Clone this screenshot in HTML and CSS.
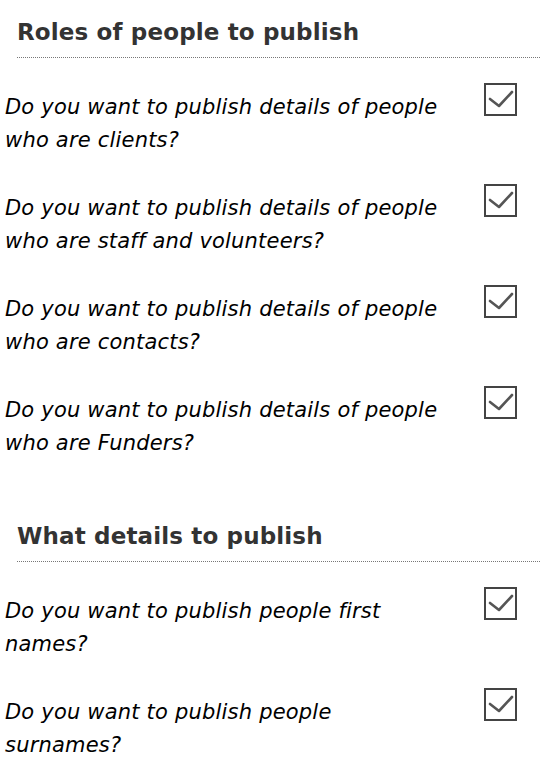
FILE: index.html
```html
<!DOCTYPE html>
<html>
<head>
<meta charset="utf-8">
<link rel="stylesheet" href="styles.css">
</head>
<body>
<section class="group">
  <h2 class="group-title">Roles of people to publish</h2>
  <div class="rows">
    <div class="row">
      <p class="question">Do you want to publish details of people who are clients?</p>
      <span class="check"><svg viewBox="0 0 33 33" width="33" height="33"><path d="M6 16 L15 23 L28 9" fill="none" stroke="#555" stroke-width="2.6" stroke-linecap="round" stroke-linejoin="round"/></svg></span>
    </div>
    <div class="row">
      <p class="question">Do you want to publish details of people who are staff and volunteers?</p>
      <span class="check"><svg viewBox="0 0 33 33" width="33" height="33"><path d="M6 16 L15 23 L28 9" fill="none" stroke="#555" stroke-width="2.6" stroke-linecap="round" stroke-linejoin="round"/></svg></span>
    </div>
    <div class="row">
      <p class="question">Do you want to publish details of people who are contacts?</p>
      <span class="check"><svg viewBox="0 0 33 33" width="33" height="33"><path d="M6 16 L15 23 L28 9" fill="none" stroke="#555" stroke-width="2.6" stroke-linecap="round" stroke-linejoin="round"/></svg></span>
    </div>
    <div class="row">
      <p class="question">Do you want to publish details of people who are Funders?</p>
      <span class="check"><svg viewBox="0 0 33 33" width="33" height="33"><path d="M6 16 L15 23 L28 9" fill="none" stroke="#555" stroke-width="2.6" stroke-linecap="round" stroke-linejoin="round"/></svg></span>
    </div>
  </div>
</section>
<section class="group">
  <h2 class="group-title">What details to publish</h2>
  <div class="rows">
    <div class="row">
      <p class="question">Do you want to publish people first names?</p>
      <span class="check"><svg viewBox="0 0 33 33" width="33" height="33"><path d="M6 16 L15 23 L28 9" fill="none" stroke="#555" stroke-width="2.6" stroke-linecap="round" stroke-linejoin="round"/></svg></span>
    </div>
    <div class="row">
      <p class="question">Do you want to publish people surnames?</p>
      <span class="check"><svg viewBox="0 0 33 33" width="33" height="33"><path d="M6 16 L15 23 L28 9" fill="none" stroke="#555" stroke-width="2.6" stroke-linecap="round" stroke-linejoin="round"/></svg></span>
    </div>
  </div>
</section>
</body>
</html>
```

FILE: styles.css
```css
html, body {
  margin: 0;
  padding: 0;
  background: #fff;
}
body {
  font-family: "DejaVu Sans", Verdana, sans-serif;
  color: #000;
}
.group + .group {
  padding-top: 44px;
}
.group-title {
  margin: 0 0 0 17px;
  padding-top: 14px;
  padding-bottom: 7px;
  font-size: 23px;
  line-height: 36px;
  font-weight: bold;
  letter-spacing: 0.15px;
  color: #333;
  border-bottom: 1px dotted #777;
}
.rows {
  display: flex;
  flex-direction: column;
  gap: 27px;
  padding-top: 25px;
}
.row {
  display: flex;
  align-items: flex-start;
  justify-content: space-between;
  padding-left: 5px;
  padding-right: 23px;
}
.question {
  margin: 8px 0 0 0;
  width: 440px;
  font-size: 21px;
  line-height: 33px;
  letter-spacing: 0.2px;
  font-style: italic;
}
.check {
  display: block;
  width: 29px;
  height: 29px;
  border: 2px solid #444;
  box-sizing: content-box;
  position: relative;
}
.check svg {
  position: absolute;
  left: -2px;
  top: -2px;
}
```
